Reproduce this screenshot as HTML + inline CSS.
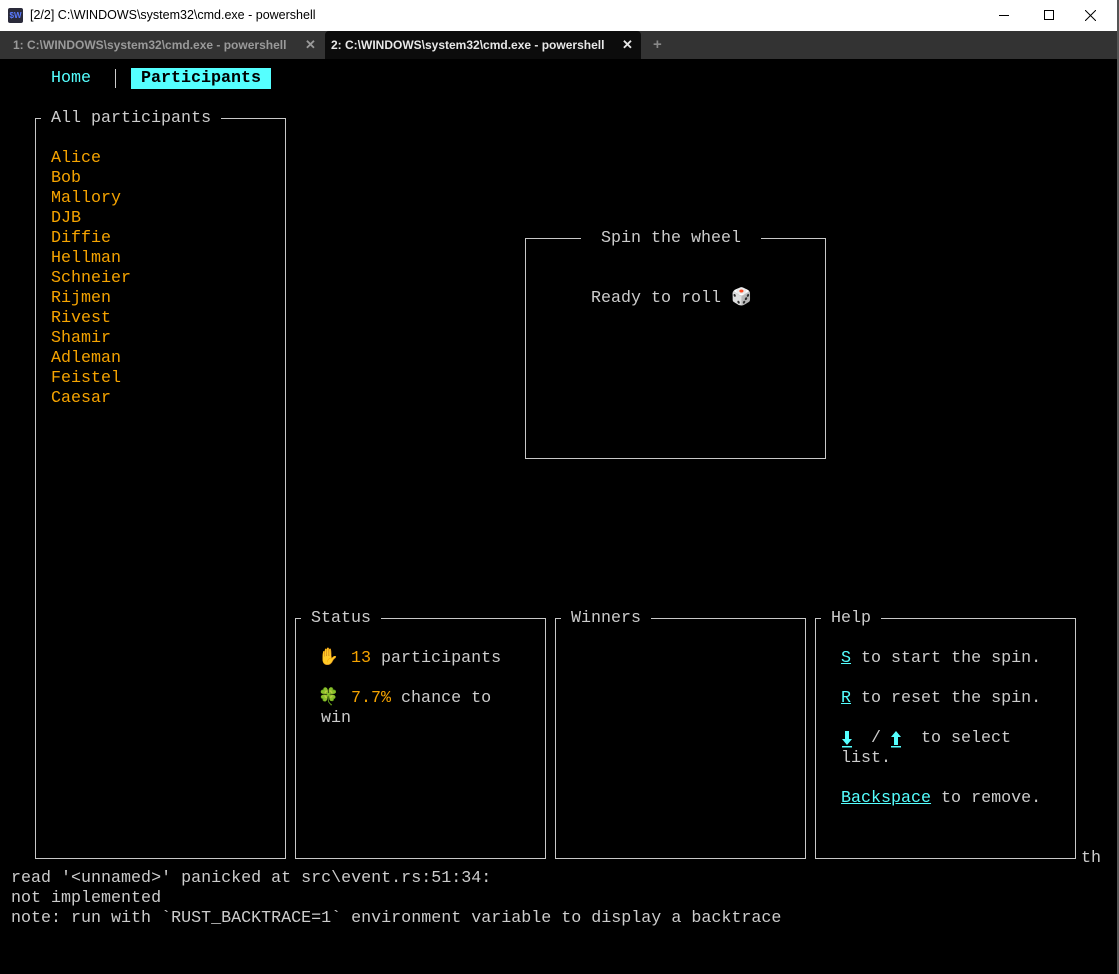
<!DOCTYPE html>
<html><head><style>
*{margin:0;padding:0;box-sizing:border-box}
body{width:1119px;height:974px;background:#000;overflow:hidden;position:relative;font-family:"Liberation Mono",monospace;font-size:16.68px;color:#cccccc}
.t{position:absolute;line-height:20px;white-space:pre;height:20px}
.o{color:#f5a300}
.c{color:#55ffff}
.u{text-decoration:underline}
.box{position:absolute;border:1px solid #c8c8c8}
.em{display:inline-block;width:23px}
#title{position:absolute;left:0;top:0;width:1119px;height:31px;background:#fff;font-family:"Liberation Sans",sans-serif;font-size:12.5px;color:#000}
#tabs{position:absolute;left:0;top:31px;width:1119px;height:28px;background:#333;font-family:"Liberation Sans",sans-serif;font-size:12px;font-weight:bold}
</style></head><body>
<div id="title">
 <div style="position:absolute;left:8px;top:8px;width:15px;height:15px;background:#2a2a3a;border-radius:2px;color:#5a7aff;font-size:8px;line-height:15px;text-align:center;font-weight:bold">$W</div>
 <div style="position:absolute;left:30px;top:8px">[2/2] C:\WINDOWS\system32\cmd.exe - powershell</div>
 <div style="position:absolute;left:999px;top:15px;width:10px;height:1px;background:#000"></div>
 <div style="position:absolute;left:1044px;top:10px;width:10px;height:10px;border:1px solid #000"></div>
 <svg style="position:absolute;left:1085px;top:10px" width="11" height="11"><path d="M0 0L11 11M11 0L0 11" stroke="#000" stroke-width="1"/></svg>
</div>
<div id="tabs">
 <div style="position:absolute;left:13px;top:7px;color:#9a9a9a">1: C:\WINDOWS\system32\cmd.exe - powershell</div>
 <div style="position:absolute;left:305px;top:6px;color:#9a9a9a;font-size:13px">✕</div>
 <div style="position:absolute;left:325px;top:0;width:316px;height:28px;background:#0c0c0c;border-radius:4px 4px 0 0"></div>
 <div style="position:absolute;left:331px;top:7px;color:#e8e8e8">2: C:\WINDOWS\system32\cmd.exe - powershell</div>
 <div style="position:absolute;left:622px;top:6px;color:#e8e8e8;font-size:13px">✕</div>
 <div style="position:absolute;left:653px;top:5px;color:#888;font-size:15px">+</div>
</div>
<div style="position:absolute;left:1117px;top:0;width:2px;height:974px;background:#555"></div>

<div class="t c" style="left:51px;top:69px">Home</div>
<div style="position:absolute;left:115px;top:69px;width:1px;height:19px;background:#ccc"></div>
<div class="t" style="left:131px;top:68px;width:140px;height:21px;padding-top:1px;background:#55ffff;color:#000;font-weight:bold;padding-left:10px">Participants</div>

<div class="box" style="left:35px;top:118px;width:251px;height:741px"></div>
<div class="t" style="left:41px;top:109px;background:#000;padding:0 10px">All participants</div>
<div class="t o" style="left:51px;top:149px;line-height:20px;height:auto">Alice
Bob
Mallory
DJB
Diffie
Hellman
Schneier
Rijmen
Rivest
Shamir
Adleman
Feistel
Caesar</div>

<div class="box" style="left:525px;top:238px;width:301px;height:221px"></div>
<div class="t" style="left:581px;top:229px;background:#000;padding:0 20px 0 20px">Spin the wheel</div>
<div class="t" style="left:591px;top:289px">Ready to roll 🎲</div>

<div class="box" style="left:295px;top:618px;width:251px;height:241px"></div>
<div class="t" style="left:301px;top:609px;background:#000;padding:0 10px">Status</div>
<div class="t" style="left:318px;top:649px"><span class="em">✋</span> <span class="o">13</span> participants</div>
<div class="t" style="left:318px;top:689px"><span class="em">🍀</span> <span class="o">7.7%</span> chance to</div>
<div class="t" style="left:321px;top:709px">win</div>

<div class="box" style="left:555px;top:618px;width:251px;height:241px"></div>
<div class="t" style="left:561px;top:609px;background:#000;padding:0 10px">Winners</div>

<div class="box" style="left:815px;top:618px;width:261px;height:241px"></div>
<div class="t" style="left:821px;top:609px;background:#000;padding:0 10px">Help</div>
<div class="t" style="left:841px;top:649px"><span class="c u">S</span> to start the spin.</div>
<div class="t" style="left:841px;top:689px"><span class="c u">R</span> to reset the spin.</div>
<div class="t" style="left:921px;top:729px">to select</div>
<div class="t" style="left:871px;top:729px">/</div>
<svg style="position:absolute;left:841px;top:730px" width="12" height="18"><path d="M4 1h4v8h3l-5 6l-5-6h3z" fill="#55ffff"/><rect x="1" y="16" width="10" height="1.5" fill="#55ffff"/></svg>
<svg style="position:absolute;left:890px;top:730px" width="12" height="18"><path d="M6 1l5 6h-3v8h-4v-8h-3z" fill="#55ffff"/><rect x="1" y="16" width="10" height="1.5" fill="#55ffff"/></svg>
<div class="t" style="left:841px;top:749px">list.</div>
<div class="t" style="left:841px;top:789px"><span class="c u">Backspace</span> to remove.</div>
<div class="t" style="left:1081px;top:849px">th</div>

<div class="t" style="left:11px;top:869px">read '&lt;unnamed&gt;' panicked at src\event.rs:51:34:</div>
<div class="t" style="left:11px;top:889px">not implemented</div>
<div class="t" style="left:11px;top:909px">note: run with `RUST_BACKTRACE=1` environment variable to display a backtrace</div>
</body></html>
